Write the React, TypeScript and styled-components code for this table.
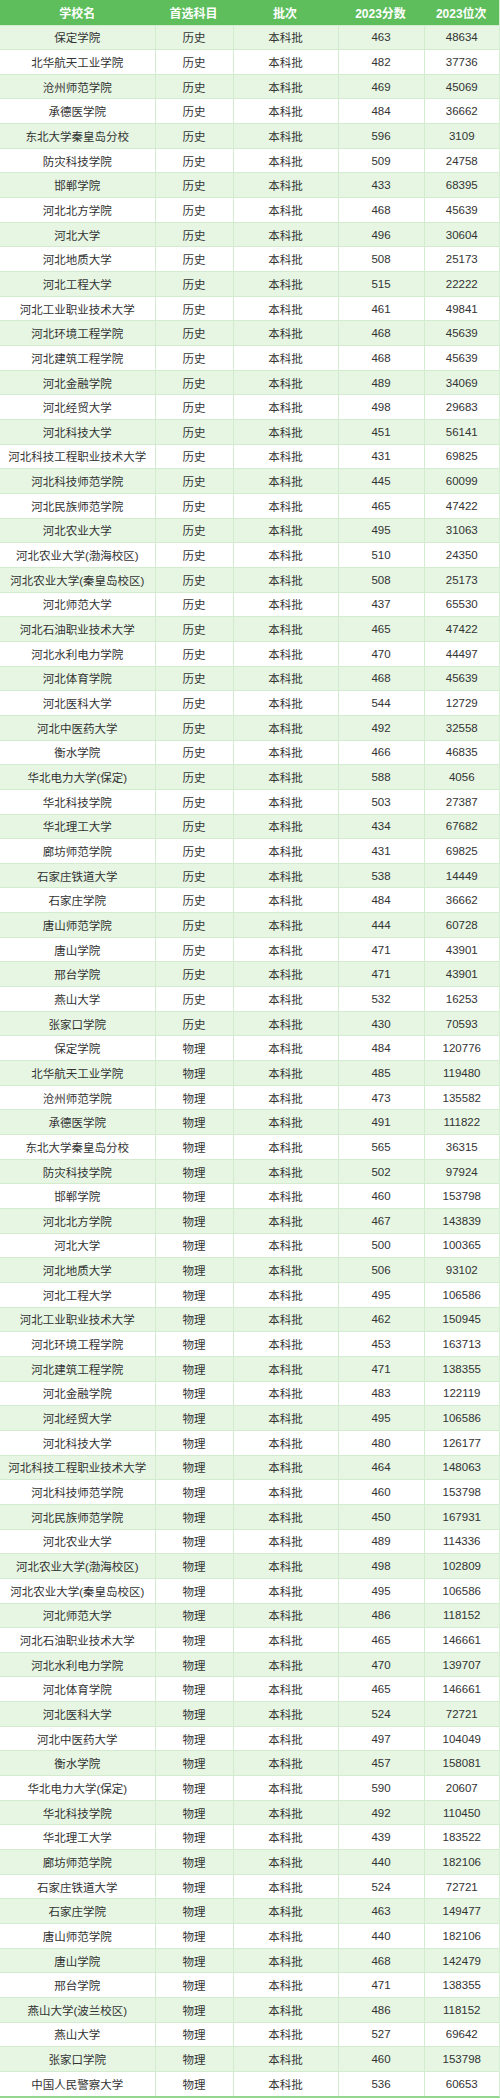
import React from "react";
import styled, { createGlobalStyle } from "styled-components";

const GlobalStyle = createGlobalStyle`
  html, body {
    margin: 0;
    padding: 0;
    background: #ffffff;
  }
  body {
    font-family: "Liberation Sans", "Noto Sans CJK SC", sans-serif;
  }
`;

const COLUMNS = "154.5px 78px 105px 86px 1fr";

const Table = styled.div`
  width: 500px;
  display: flex;
  flex-direction: column;
  border-bottom: 2.2px solid #93d68e;
  border-right: 1px solid #d6eed3;
  box-sizing: border-box;
`;

const HeaderRow = styled.div`
  display: grid;
  grid-template-columns: ${COLUMNS};
  height: 24.5px;
  background: #5dbe5b;
`;

const HeaderCell = styled.div`
  display: flex;
  align-items: center;
  justify-content: center;
  color: #ffffff;
  font-size: 12px;
  font-weight: bold;
`;

const Row = styled.div<{ $striped: boolean }>`
  display: grid;
  grid-template-columns: ${COLUMNS};
  height: 24.67px;
  box-sizing: border-box;
  background: ${(p) => (p.$striped ? "#e6f6e3" : "#ffffff")};
  border-top: 1px solid #d3ecd0;
`;

const Cell = styled.div`
  display: flex;
  align-items: center;
  justify-content: center;
  color: #333333;
  font-size: 11.5px;
  white-space: nowrap;
  border-left: 1px solid #d3ecd0;
  &:first-child {
    border-left: none;
  }
`;

type Entry = [string, string, number, number];

const H = "历史";
const P = "物理";

const data: Entry[] = [
  ["保定学院", H, 463, 48634],
  ["北华航天工业学院", H, 482, 37736],
  ["沧州师范学院", H, 469, 45069],
  ["承德医学院", H, 484, 36662],
  ["东北大学秦皇岛分校", H, 596, 3109],
  ["防灾科技学院", H, 509, 24758],
  ["邯郸学院", H, 433, 68395],
  ["河北北方学院", H, 468, 45639],
  ["河北大学", H, 496, 30604],
  ["河北地质大学", H, 508, 25173],
  ["河北工程大学", H, 515, 22222],
  ["河北工业职业技术大学", H, 461, 49841],
  ["河北环境工程学院", H, 468, 45639],
  ["河北建筑工程学院", H, 468, 45639],
  ["河北金融学院", H, 489, 34069],
  ["河北经贸大学", H, 498, 29683],
  ["河北科技大学", H, 451, 56141],
  ["河北科技工程职业技术大学", H, 431, 69825],
  ["河北科技师范学院", H, 445, 60099],
  ["河北民族师范学院", H, 465, 47422],
  ["河北农业大学", H, 495, 31063],
  ["河北农业大学(渤海校区)", H, 510, 24350],
  ["河北农业大学(秦皇岛校区)", H, 508, 25173],
  ["河北师范大学", H, 437, 65530],
  ["河北石油职业技术大学", H, 465, 47422],
  ["河北水利电力学院", H, 470, 44497],
  ["河北体育学院", H, 468, 45639],
  ["河北医科大学", H, 544, 12729],
  ["河北中医药大学", H, 492, 32558],
  ["衡水学院", H, 466, 46835],
  ["华北电力大学(保定)", H, 588, 4056],
  ["华北科技学院", H, 503, 27387],
  ["华北理工大学", H, 434, 67682],
  ["廊坊师范学院", H, 431, 69825],
  ["石家庄铁道大学", H, 538, 14449],
  ["石家庄学院", H, 484, 36662],
  ["唐山师范学院", H, 444, 60728],
  ["唐山学院", H, 471, 43901],
  ["邢台学院", H, 471, 43901],
  ["燕山大学", H, 532, 16253],
  ["张家口学院", H, 430, 70593],
  ["保定学院", P, 484, 120776],
  ["北华航天工业学院", P, 485, 119480],
  ["沧州师范学院", P, 473, 135582],
  ["承德医学院", P, 491, 111822],
  ["东北大学秦皇岛分校", P, 565, 36315],
  ["防灾科技学院", P, 502, 97924],
  ["邯郸学院", P, 460, 153798],
  ["河北北方学院", P, 467, 143839],
  ["河北大学", P, 500, 100365],
  ["河北地质大学", P, 506, 93102],
  ["河北工程大学", P, 495, 106586],
  ["河北工业职业技术大学", P, 462, 150945],
  ["河北环境工程学院", P, 453, 163713],
  ["河北建筑工程学院", P, 471, 138355],
  ["河北金融学院", P, 483, 122119],
  ["河北经贸大学", P, 495, 106586],
  ["河北科技大学", P, 480, 126177],
  ["河北科技工程职业技术大学", P, 464, 148063],
  ["河北科技师范学院", P, 460, 153798],
  ["河北民族师范学院", P, 450, 167931],
  ["河北农业大学", P, 489, 114336],
  ["河北农业大学(渤海校区)", P, 498, 102809],
  ["河北农业大学(秦皇岛校区)", P, 495, 106586],
  ["河北师范大学", P, 486, 118152],
  ["河北石油职业技术大学", P, 465, 146661],
  ["河北水利电力学院", P, 470, 139707],
  ["河北体育学院", P, 465, 146661],
  ["河北医科大学", P, 524, 72721],
  ["河北中医药大学", P, 497, 104049],
  ["衡水学院", P, 457, 158081],
  ["华北电力大学(保定)", P, 590, 20607],
  ["华北科技学院", P, 492, 110450],
  ["华北理工大学", P, 439, 183522],
  ["廊坊师范学院", P, 440, 182106],
  ["石家庄铁道大学", P, 524, 72721],
  ["石家庄学院", P, 463, 149477],
  ["唐山师范学院", P, 440, 182106],
  ["唐山学院", P, 468, 142479],
  ["邢台学院", P, 471, 138355],
  ["燕山大学(波兰校区)", P, 486, 118152],
  ["燕山大学", P, 527, 69642],
  ["张家口学院", P, 460, 153798],
  ["中国人民警察大学", P, 536, 60653],
];

const headers = ["学校名", "首选科目", "批次", "2023分数", "2023位次"];

export default function App() {
  return (
    <>
      <GlobalStyle />
      <Table>
        <HeaderRow>
          {headers.map((h) => (
            <HeaderCell key={h}>{h}</HeaderCell>
          ))}
        </HeaderRow>
        {data.map(([name, subject, score, rank], i) => (
          <Row key={i} $striped={i % 2 === 0}>
            <Cell>{name}</Cell>
            <Cell>{subject}</Cell>
            <Cell>本科批</Cell>
            <Cell>{score}</Cell>
            <Cell>{rank}</Cell>
          </Row>
        ))}
      </Table>
    </>
  );
}
